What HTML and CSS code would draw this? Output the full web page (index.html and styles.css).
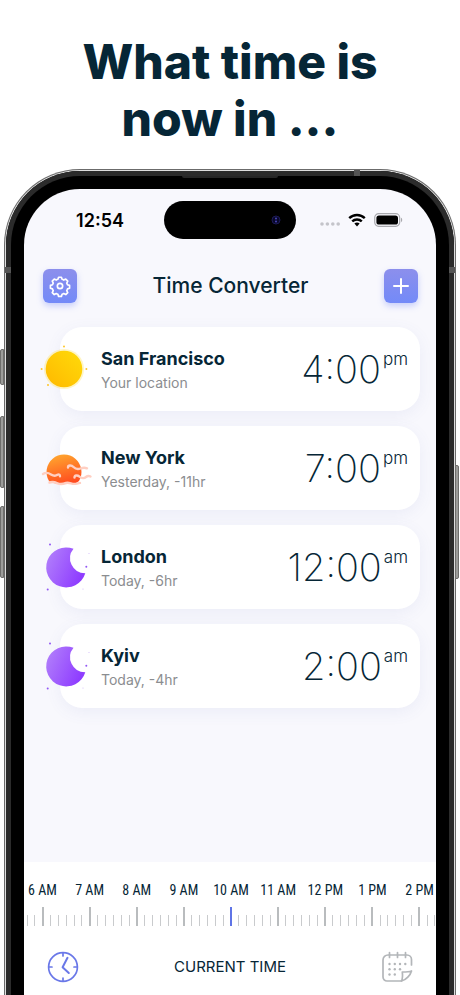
FILE: index.html
```html
<!DOCTYPE html>
<html lang="en">

<head>
    <meta charset="utf-8">
    <meta name="viewport" content="width=device-width, initial-scale=1">
    <title>Time Converter</title>
    <link rel="stylesheet" href="styles.css">
</head>

<body>

<h1 class="headline">What time is<br>now in ...</h1>

<div class="phone">
    <span class="side mute"></span>
    <span class="side vol_up"></span>
    <span class="side vol_down"></span>
    <span class="side power"></span>

    <div class="frame">
    <span class="band band_left"></span>
    <span class="band band_right"></span>
    <span class="band band_top"></span>
    <span class="speaker"></span>

    <div class="screen">
        <div class="status">
            <div class="clock">12:54</div>
            <div class="island">
                <svg width="10" height="10" viewBox="0 0 10 10">
                    <circle cx="5" cy="5" r="4" fill="#08082a" stroke="#1d1a55" stroke-width="1"/>
                    <circle cx="5" cy="3.4" r="1" fill="#4a45b8"/>
                    <circle cx="5" cy="6.6" r="1" fill="#4a45b8"/>
                </svg>
            </div>
            <div class="signals">
                <svg width="20" height="14" viewBox="0 0 20 14" fill="#c4c4ca">
                    <circle cx="2" cy="11" r="1.8"/>
                    <circle cx="7.4" cy="11" r="1.8"/>
                    <circle cx="12.8" cy="11" r="1.8"/>
                    <circle cx="18.2" cy="11" r="1.8"/>
                </svg>
                <svg width="18" height="14" viewBox="0 0 18 14" fill="none" stroke="#000" stroke-width="2.4">
                    <path d="M1.2 5.2a11.2 11.2 0 0 1 15.6 0"/>
                    <path d="M4.2 8.4a7 7 0 0 1 9.6 0"/>
                    <path d="M9 13.4 6.4 10.6a3.8 3.8 0 0 1 5.2 0z" fill="#000" stroke="none"/>
                </svg>
                <svg width="29" height="14" viewBox="0 0 29 14">
                    <rect x="0.7" y="0.7" width="25" height="12.6" rx="4" fill="none" stroke="#a9a9ae" stroke-width="1.2"/>
                    <rect x="2.4" y="2.4" width="21.6" height="9.2" rx="2.6" fill="#000"/>
                    <path d="M27 4.8c1.6.5 1.6 3.9 0 4.4z" fill="#a9a9ae"/>
                </svg>
            </div>
        </div>

        <header>
            <button class="square" aria-label="Settings">
                <svg width="20" height="20" viewBox="0 0 24 24" fill="none" stroke="#fff" stroke-width="2" stroke-linejoin="round">
                    <circle cx="12" cy="12" r="3.2"/>
                    <path d="M10.300 1.500h3.400l.8 2.500c.9.300 1.300.500 2 .9l2.400-1.200 2.400 2.400-1.200 2.400c.4.700.6 1.100.9 2l2.500.8v3.400l-2.500.8c-.3.900-.5 1.300-.9 2l1.200 2.400-2.400 2.400-2.400-1.200c-.7.4-1.100.6-2 .9l-.8 2.500h-3.400l-.8-2.500c-.9-.3-1.300-.5-2-.9l-2.400 1.200-2.400-2.400 1.200-2.400c-.4-.7-.6-1.100-.9-2l-2.500-.8v-3.400l2.500-.8c.3-.9.500-1.300.9-2l-1.200-2.400 2.400-2.400 2.400 1.200c.7-.4 1.100-.6 2-.9z"/>
                </svg>
            </button>
            <h2>Time Converter</h2>
            <button class="square" aria-label="Add city">
                <svg width="14" height="14" viewBox="0 0 14 14" stroke="#fff" stroke-width="2" stroke-linecap="round">
                    <path d="M7 0v14M0 7h14"/>
                </svg>
            </button>
        </header>

        <ul class="cities">
            <li class="card">
                <svg class="sky" viewBox="0 0 48 48">
                    <defs>
                        <linearGradient id="sun" x1="0" y1="1" x2="1" y2="0">
                            <stop offset="0" stop-color="#ffb800"/>
                            <stop offset="1" stop-color="#ffdb0a"/>
                        </linearGradient>
                        <linearGradient id="dusk" x1="0.3" y1="0" x2="0.6" y2="1">
                            <stop offset="0" stop-color="#ffa62e"/>
                            <stop offset="1" stop-color="#ff4a1f"/>
                        </linearGradient>
                        <linearGradient id="moon" x1="0" y1="0.3" x2="0.9" y2="0.7">
                            <stop offset="0" stop-color="#b07cfb"/>
                            <stop offset="1" stop-color="#8f3dff"/>
                        </linearGradient>
                    </defs>
                    <circle cx="24" cy="24" r="20" fill="#ffdf3a" opacity="0.3"/>
                    <circle cx="24" cy="24" r="18.3" fill="url(#sun)"/>
                    <g fill="#ffc629">
                        <circle cx="24" cy="1.6" r="1"/>
                        <circle cx="1.6" cy="24" r="1"/>
                        <circle cx="46.4" cy="24" r="1"/>
                        <circle cx="8" cy="40" r="1"/>
                    </g>
                </svg>
                <div class="place">
                    <h3>San Francisco</h3>
                    <p>Your location</p>
                </div>
                <div class="time">4:00<span>pm</span></div>
            </li>
            <li class="card">
                <svg class="sky" viewBox="0 0 48 48">
                    <path d="M9 37A17.5 17.5 0 1 1 39 37Q36 40 32 39Q28 41 24 39Q18 41 14 39Q11 39 9 37z" fill="url(#dusk)"/>
                    <g fill="none" stroke="#ffcfc2" stroke-width="2.400" stroke-linecap="round">
                        <path d="M28 23.500c0-2.500 3.500-2.500 5.500-.5s4.500 2.500 7 1.500 4.500-1 6.500-.2"/>
                        <path d="M3 30c3-2 5.500-1.200 8 .4s5 1.400 6.500.4 2.500.2 2.500 1.500"/>
                        <path d="M34.500 33.500c0-2.500 3-2.500 5-.8s5 1.600 6.500.3 3.500-1 4.500-.5"/>
                        <path d="M9.500 38.500c3-1 5-.5 8 .8s6 .6 8.500-.3 5.500.8 8 .9 4.500-1 6-1"/>
                    </g>
                </svg>
                <div class="place">
                    <h3>New York</h3>
                    <p>Yesterday, -11hr</p>
                </div>
                <div class="time">7:00<span>pm</span></div>
            </li>
            <li class="card">
                <svg class="sky" viewBox="0 0 48 48">
                    <path d="M33.5 5.8A20 20 0 1 0 45.3 30.3A15 15 0 0 1 33.5 5.8z" fill="url(#moon)"/>
                    <g fill="#9257f5">
                        <circle cx="10" cy="1.5" r="1"/>
                        <circle cx="7.7" cy="46.5" r="1"/>
                        <circle cx="46.3" cy="23.8" r="1"/>
                        <circle cx="49" cy="10.5" r="0.6" opacity="0.4"/>
                        <circle cx="43" cy="46" r="0.6" opacity="0.4"/>
                    </g>
                </svg>
                <div class="place">
                    <h3>London</h3>
                    <p>Today, -6hr</p>
                </div>
                <div class="time">12:00<span>am</span></div>
            </li>
            <li class="card">
                <svg class="sky" viewBox="0 0 48 48">
                    <path d="M33.5 5.8A20 20 0 1 0 45.3 30.3A15 15 0 0 1 33.5 5.8z" fill="url(#moon)"/>
                    <g fill="#9257f5">
                        <circle cx="10" cy="1.5" r="1"/>
                        <circle cx="7.7" cy="46.5" r="1"/>
                        <circle cx="46.3" cy="23.8" r="1"/>
                        <circle cx="49" cy="10.5" r="0.6" opacity="0.4"/>
                        <circle cx="43" cy="46" r="0.6" opacity="0.4"/>
                    </g>
                </svg>
                <div class="place">
                    <h3>Kyiv</h3>
                    <p>Today, -4hr</p>
                </div>
                <div class="time">2:00<span>am</span></div>
            </li>
        </ul>

        <footer>
            <div class="hours">
                <span>6 AM</span>
                <span>7 AM</span>
                <span>8 AM</span>
                <span>9 AM</span>
                <span>10 AM</span>
                <span>11 AM</span>
                <span>12 PM</span>
                <span>1 PM</span>
                <span>2 PM</span>
            </div>
            <div class="ticks"></div>
            <div class="tabs">
                <button aria-label="Current time">
                    <svg width="32" height="32" viewBox="0 0 32 32" fill="none" stroke="#6a78e8" stroke-width="1.7" stroke-linecap="round">
                        <circle cx="16" cy="16" r="14.4"/>
                        <path d="M16 2v3M16 27v3M2 16h3M27 16h3"/>
                        <path d="M20.5 6.8 15.6 16.3 21.8 22" stroke-width="2" stroke-linejoin="round"/>
                    </svg>
                </button>
                <div class="mode">CURRENT TIME</div>
                <button aria-label="Calendar">
                    <svg width="32" height="32" viewBox="0 0 32 32" fill="none" stroke="#b3b6b9" stroke-width="1.7" stroke-linecap="round" stroke-linejoin="round">
                        <path d="M20.5 30H6a4 4 0 0 1-4-4V9a5 5 0 0 1 5-5h19a4.5 4.5 0 0 1 4.500 4.500V14"/>
                        <path d="M8.5 1.5v5M16.5 1.5v5M24.5 1.5v5"/>
                        <path d="M30.5 20c-1 4-5.500 9-10 10 1.500-3 1.200-5.500.8-9 3.700 0 6.700 0 9.200-1z"/>
                        <g fill="#b3b6b9" stroke="none">
                            <circle cx="8.5" cy="13" r="1.2"/><circle cx="13.8" cy="13" r="1.2"/><circle cx="19" cy="13" r="1.2"/><circle cx="24.3" cy="13" r="1.2"/>
                            <circle cx="8.5" cy="18.3" r="1.2"/><circle cx="13.8" cy="18.3" r="1.2"/><circle cx="19" cy="18.3" r="1.2"/>
                            <circle cx="8.5" cy="23.5" r="1.2"/><circle cx="13.8" cy="23.5" r="1.2"/>
                        </g>
                    </svg>
                </button>
            </div>
        </footer>
    </div>
    </div>
</div>

<script>
    // one tick every 10 minutes, a long one on the hour
    const ticks = document.querySelector('.ticks');
    const middle = 27;

    for (let i = 0; i <= middle * 2; i++) {
        const tick = document.createElement('i');
        if ((i - middle) % 6 === 0) {
            tick.className = 'hour';
        }
        if (i === middle) {
            tick.className = 'hour now';
        }
        ticks.appendChild(tick);
    }
</script>

</body>

</html>
```
FILE: styles.css
```css
* {
    margin: 0;
    padding: 0;
    box-sizing: border-box;
}

body {
    display: flex;
    flex-direction: column;
    min-height: 100vh;
    background-color: #fff;
    color: #062636;
    font-family: Inter, "Liberation Sans", sans-serif;
    overflow-x: hidden;
}

button {
    border: none;
    background: none;
    cursor: pointer;
}

svg {
    display: block;
    overflow: visible;
}

.headline {
    padding: 33px 16px 22px;
    font-size: 48px;
    line-height: 57px;
    font-weight: 800;
    text-align: center;
}

/* phone body, open at the bottom of the page */
.phone {
    position: relative;
    flex: 1;
    display: flex;
    flex-direction: column;
    margin: 1px 5px 0;
    border: 1px solid #dedede;
    border-bottom: none;
    border-radius: 75px 75px 0 0;
    background-color: #000;
    box-shadow: 0 0 0 1px #6b6b6b;
}

.frame {
    position: relative;
    flex: 1;
    display: flex;
    flex-direction: column;
    padding: 13px 13px 0;
    border: 5px solid #2b2b2b;
    border-bottom: none;
    border-radius: 74px 74px 0 0;
    background-color: #000;
}

.side {
    position: absolute;
    left: -6px;
    width: 4px;
    border-radius: 2px 0 0 2px;
    background-color: #9c9c9a;
    border: 1px solid #6e6e6c;
}

.mute {
    top: 178px;
    height: 36px;
}

.vol_up {
    top: 245px;
    height: 72px;
}

.vol_down {
    top: 335px;
    height: 72px;
}

.power {
    top: 294px;
    left: auto;
    right: -5px;
    height: 114px;
    border-radius: 0 2px 2px 0;
}

.band {
    position: absolute;
    top: 91px;
    width: 6px;
    height: 6px;
    background-color: #555;
}

.band_left {
    left: -6px;
}

.band_right {
    right: -6px;
}

.band_top {
    top: -6px;
    right: 89px;
}

.speaker {
    position: absolute;
    top: 0;
    left: 39%;
    right: 39%;
    height: 2px;
    border-radius: 0 0 2px 2px;
    background-color: #262626;
}

.screen {
    flex: 1;
    display: flex;
    flex-direction: column;
    border-radius: 56px 56px 0 0;
    background-color: #f8f8fd;
    overflow: hidden;
}

/* status bar */
.status {
    display: grid;
    grid-template-columns: 1fr auto 1fr;
    align-items: center;
    padding-top: 12px;
    color: #000;
}

.clock {
    padding-left: 12px;
    font-size: 18px;
    font-weight: 600;
    text-align: center;
}

.island {
    display: flex;
    align-items: center;
    justify-content: flex-end;
    width: 132px;
    height: 38px;
    padding-right: 15px;
    border-radius: 20px;
    background-color: #000;
}

.signals {
    display: flex;
    align-items: center;
    gap: 8px;
    padding-left: 24px;
}

header {
    display: flex;
    align-items: center;
    justify-content: space-between;
    padding: 30px 18px 24px 19px;
}

header h2 {
    font-size: 21px;
    line-height: 28px;
    font-weight: 500;
}

.square {
    display: flex;
    align-items: center;
    justify-content: center;
    width: 34px;
    height: 34px;
    border-radius: 6px;
    background-image: linear-gradient(to bottom, #8c8fec, #738af8);
    box-shadow: 0 3px 6px rgba(110, 130, 245, 0.35);
}

/* city cards */
.cities {
    flex: 1;
    display: flex;
    flex-direction: column;
    gap: 15px;
    padding: 0 16px 24px 36px;
    list-style: none;
}

.card {
    display: flex;
    align-items: center;
    height: 84px;
    padding-right: 12px;
    border-radius: 22px;
    background-color: #fff;
    box-shadow: 0 4px 16px rgba(90, 100, 180, 0.08);
}

.sky {
    flex: none;
    width: 48px;
    height: 48px;
    margin-left: -20px;
}

.place {
    flex: 1;
    margin-left: 13px;
    padding-top: 4px;
}

.place h3 {
    font-size: 18px;
    line-height: 24px;
    font-weight: 700;
}

.place p {
    color: #8b8d90;
    font-size: 14px;
    line-height: 24px;
}

.time {
    display: flex;
    gap: 2px;
    font-size: 38px;
    line-height: 48px;
    font-weight: 200;
}

.time span {
    font-size: 17px;
    line-height: 28px;
    font-weight: 300;
}

/* timeline and tabs */
footer {
    background-color: #fff;
    padding-top: 18px;
}

.hours,
.ticks {
    display: flex;
    justify-content: center;
    padding-left: 2px;
    overflow: hidden;
}

.hours span {
    flex: 0 0 11.5%;
    font-family: "Liberation Sans Narrow", "Roboto Condensed", Roboto, sans-serif;
    font-size: 14px;
    line-height: 20px;
    font-weight: 400;
    text-align: center;
    white-space: nowrap;
}

.ticks {
    align-items: flex-end;
    height: 20px;
    margin-top: 6px;
}

.ticks i {
    flex: 0 0 calc(11.5% / 6);
    height: 11px;
    background: linear-gradient(#c9cbcd, #c9cbcd) center / 1px 100% no-repeat;
}

.ticks .hour {
    height: 19px;
    background: linear-gradient(#b9bcbe, #b9bcbe) center / 2px 100% no-repeat;
}

.ticks .now {
    background: linear-gradient(#5f74e6, #5f74e6) center / 2px 100% no-repeat;
}

.tabs {
    display: flex;
    align-items: center;
    justify-content: space-between;
    padding: 25px 23px 12px;
}

.mode {
    font-size: 15px;
    line-height: 20px;
}
```
